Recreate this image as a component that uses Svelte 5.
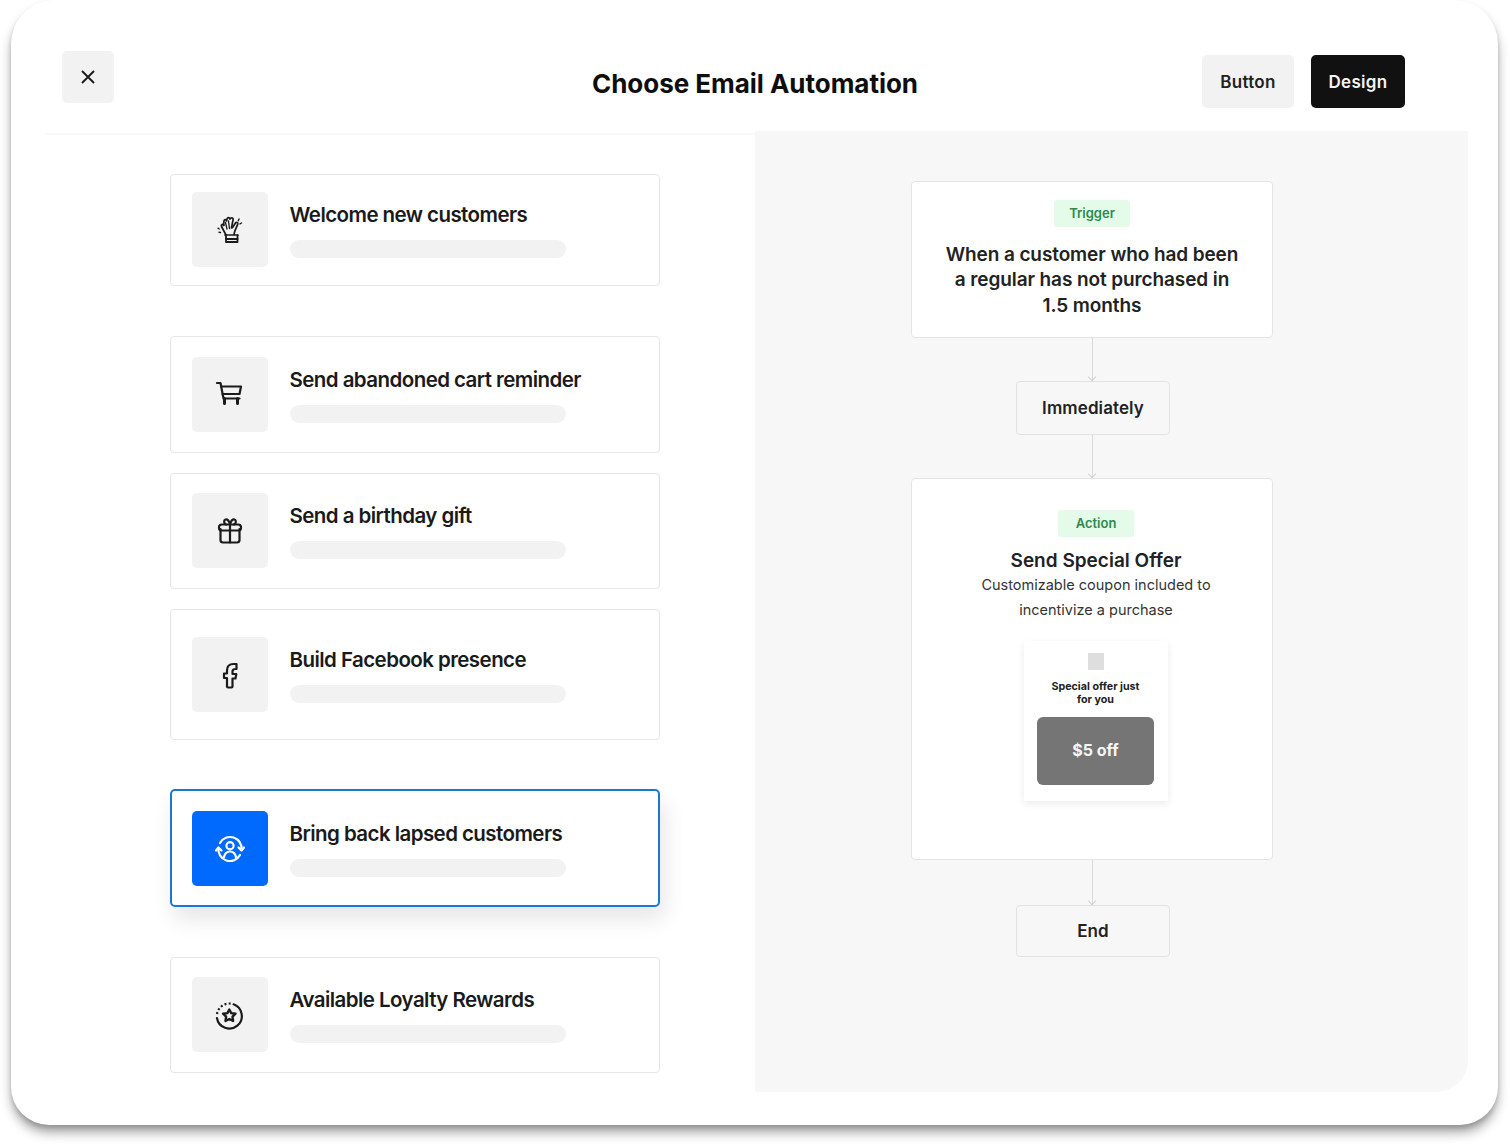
<script>
  const cards = [
    { id: 'c1', title: 'Welcome new customers', icon: 'hand' },
    { id: 'c2', title: 'Send abandoned cart reminder', icon: 'cart' },
    { id: 'c3', title: 'Send a birthday gift', icon: 'gift' },
    { id: 'c4', title: 'Build Facebook presence', icon: 'fb' },
    { id: 'c5', title: 'Bring back lapsed customers', icon: 'user', active: true },
    { id: 'c6', title: 'Available Loyalty Rewards', icon: 'star' }
  ];
</script>

<div class="frame">
  <header class="top">
    <button class="close" aria-label="Close">
      <svg width="16" height="16" viewBox="0 0 16 16"><path d="M2 2l12 12M14 2L2 14" stroke="#1a1a1a" stroke-width="1.9" fill="none"/></svg>
    </button>
    <h1>Choose Email Automation</h1>
    <div class="actions">
      <button class="btn light">Button</button>
      <button class="btn dark">Design</button>
    </div>
  </header>

  <div class="body">
    <section class="list">
      {#each cards as c}
        <article class="card {c.id}" class:active={c.active}>
          <div class="ico">
            <svg width="32" height="32" viewBox="0 0 32 32" fill="none" stroke="currentColor" stroke-width="2.200" stroke-linecap="round" stroke-linejoin="round">
              {#if c.icon === 'hand'}
                <path d="M12 21L7.500 12.500c-.9-1.900 1.400-3 2.500-1.300" stroke-width="1.700"/>
                <path d="M9.500 11.500L10 6.800c.3-1.700 2.500-1.500 2.600.2M12.500 7l.7-2.500c.5-1.500 2.600-1.200 2.600.4M15.800 5l.9-.8c1-.9 2.800-.2 2.400 1.300l-1.600 8.500" stroke-width="1.700"/>
                <path d="M11.500 8.500l1.500 6.500M14.500 7l1 7.500" stroke-width="1.300"/>
                <path d="M18.500 13.500l3-4.500c.8-1.200 2.800-.3 2.300 1.100l-3 7-.8 3.400" stroke-width="1.700"/>
                <path d="M11 21h13" stroke-width="1.700"/>
                <path d="M12 21.500v6.500h11.500v-6.500" stroke-width="1.800"/>
                <path d="M12 25h11.500" stroke-width="1.800"/>
                <path d="M25 5l-.7 1.800M27.500 9l-1.500.8M5.200 15l-1.200-.8M6.500 18.500l-1.500-.3" stroke-width="1.400"/>
              {:else if c.icon === 'cart'}
                <g transform="translate(0 -1)">
                  <path d="M3 5h3.500l3 15.500h16"/>
                  <path d="M7 8.500h20l-1.500 7.500H8.500"/>
                  <path d="M10.500 20.500v5M23.500 20.500v5" stroke-width="3"/>
                </g>
              {:else if c.icon === 'gift'}
                <path d="M6.500 14v11a2.500 2.500 0 0 0 2.500 2.500h14a2.500 2.500 0 0 0 2.500-2.500V14"/>
                <rect x="5" y="9.500" width="22" height="6" rx="2.800"/>
                <path d="M16 9.500v18M16 9.500c-1-4.500-3-5.500-4.500-5-2 .7-1.800 4 .5 5M16 9.500c1-4.500 3-5.500 4.500-5 2 .7 1.800 4-.5 5"/>
              {:else if c.icon === 'fb'}
                <path d="M14 28.500h3.500a1 1 0 0 0 1-1v-8h3l.8-4.500h-3.800v-2.500c0-1.500 1-2.500 3-2.500h1V5h-3c-4 0-6.500 2.500-6.500 6.500v3H10V19h3v8.500a1 1 0 0 0 1 1z"/>
              {:else if c.icon === 'user'}
                <circle cx="16" cy="12.800" r="3.600"/>
                <path d="M10 24c1-4 3-5.500 6-5.500s5 1.500 6 5.500"/>
                <path d="M6 10A11.500 11.500 0 0 1 27.500 17M26 22A11.500 11.500 0 0 1 4.500 15"/>
                <path d="M24.500 14.500l3 3 2.500-3M2 17.500l2.500-3 3 3"/>
              {:else}
                <path d="M19.600 5.300A12.500 12.500 0 1 1 3 19.200"/>
                <path d="M3 15A12.500 12.500 0 0 1 17 4.600" stroke-dasharray="2 2.200" stroke-linecap="butt"/>
                <path d="M15.300 10.500l1.900 3.600 4.300.6-3 3 .6 4.300-3.800-2-3.800 2 .6-4.300-3-3 4.300-.6z" stroke-width="2.400"/>
              {/if}
            </svg>
          </div>
          <div class="info">
            <h2>{c.title}</h2>
            <div class="bar"></div>
          </div>
        </article>
      {/each}
    </section>

    <section class="flow">
      <div class="node trigger">
        <span class="badge">Trigger</span>
        <p class="big">When a customer who had been a regular has not purchased in 1.5 months</p>
      </div>
      <div class="line l1"></div>
      <div class="step">Immediately</div>
      <div class="line l2"></div>
      <div class="node action">
        <span class="badge">Action</span>
        <h3>Send Special Offer</h3>
        <p class="sub">Customizable coupon included to incentivize a purchase</p>
        <div class="mail">
          <div class="sq"></div>
          <p>Special offer just for you</p>
          <div class="off">$5 off</div>
        </div>
      </div>
      <div class="line l3"></div>
      <div class="step end">End</div>
    </section>
  </div>
</div>

<style>
  :global(body) { margin: 0; min-height: 1148px; background: #fff; font-family: Inter, "Liberation Sans", sans-serif; color: #1c1c1c; }
  * { box-sizing: border-box; }
  .frame {
    width: 1487px; height: 1125px; margin-left: 11px; background: #fff;
    border-radius: 44px 44px 38px 38px;
    box-shadow: 0 8px 12px -1px rgba(0,0,0,.38), 0 3px 4px rgba(0,0,0,.12);
    padding-left: 34px; padding-right: 30px;
    display: flex; flex-direction: column;
  }
  .top { height: 131px; flex: none; position: relative; display: flex; align-items: flex-start; margin-left: 17px; }
  .close { margin-top: 51px; width: 52px; height: 52px; border: 0; border-radius: 5px; background: #f2f2f2; display: flex; align-items: center; justify-content: center; padding: 0; }
  h1 { position: absolute; left: 0; margin: 0; top: 67px; text-align: center; font-size: 26px; line-height: 34px; font-weight: 700; letter-spacing: -.03px; color: #0e0e0e; width: 1386px; }
  .actions { margin-left: auto; margin-top: 55px; margin-right: 63px; display: flex; gap: 17px; position: relative; }
  .btn { height: 53px; border: 0; border-radius: 5px; padding: 2px 0 0; font: 600 17px/1 Inter, sans-serif; letter-spacing: .3px; }
  .light { width: 92px; background: #f2f2f2; color: #222; }
  .dark { width: 94px; background: #111; color: #f4f4f4; }
  .body { display: flex; flex: none; height: 961px; }
  .list { width: 710px; border-top: 2px solid #f8f8f8; margin-top: 2px; padding: 39px 0 0 125px; }
  .card { width: 490px; border: 1.500px solid #e6e6e6; border-radius: 4px; background: #fff; display: flex; align-items: flex-start; padding-left: 21px; gap: 21.500px; }
  .c1 { height: 112px; padding-top: 17px; }
  .c2 { height: 117px; margin-top: 50px; padding-top: 20px; }
  .c3 { height: 116px; margin-top: 20px; padding-top: 19px; }
  .c4 { height: 131px; margin-top: 20px; padding-top: 27px; }
  .c5 { height: 118px; margin-top: 49px; padding-top: 20px; }
  .c6 { height: 116px; margin-top: 50px; padding-top: 19px; }
  .active { border: 2px solid #1c76d6; border-radius: 5px; padding-left: 20px; box-shadow: 4px 12px 22px rgba(0,0,0,.1); }
  .ico { width: 76px; height: 75px; flex: none; border-radius: 5px; background: #f2f2f2; display: flex; align-items: center; justify-content: center; color: #1b1b1b; }
  .active .ico { background: #006aff; color: #fff; }
  .info { width: 276px; }
  h2 { margin: 9px 0 0; font-size: 20.500px; line-height: 28px; font-weight: 600; letter-spacing: -.56px; white-space: nowrap; color: #1a1a1a; }
  .bar { margin-top: 11px; height: 18px; border-radius: 9px; background: #f2f2f2; }
  .flow { width: 713px; background: #f7f7f7; border-bottom-right-radius: 32px; padding-left: 156px; display: flex; flex-direction: column; align-items: flex-start; padding-top: 50px; }
  .node { width: 362px; background: #fff; border: 1.500px solid #e4e4e4; border-radius: 4px; display: flex; flex-direction: column; align-items: center; text-align: center; }
  .trigger { height: 157px; padding-top: 18px; }
  .action { height: 382px; padding: 31px 0 0 8px; }
  .badge { width: 76px; height: 27px; background: #e4fbe9; border-radius: 3px; color: #2c8a4c; font-size: 13px; font-weight: 600; line-height: 27px; }
  .big { margin: 14.500px 0 0; width: 296px; font-size: 19px; line-height: 25.500px; font-weight: 600; color: #222; letter-spacing: -.1px; }
  h3 { margin: 11px 0 0; font-size: 19px; line-height: 26px; font-weight: 600; color: #222; }
  .sub { margin: -2px 0 0; width: 260px; font-size: 14.500px; line-height: 25px; color: #333; }
  .mail { margin-top: 19px; width: 144px; height: 160px; background: #fff; box-shadow: 0 3px 8px rgba(0,0,0,.08); display: flex; flex-direction: column; align-items: center; padding: 12px 1px 0 0; }
  .sq { width: 16px; height: 17px; background: #dedede; }
  .mail p { margin: 10px 0 0; width: 100px; font-size: 10.700px; line-height: 13px; font-weight: 700; color: #222; }
  .off { margin-top: 11px; width: 117px; height: 68px; border-radius: 6px; background: #757575; color: #f5f5f5; font-size: 16px; font-weight: 700; line-height: 67px; }
  .line { width: 1px; background: #d9d9d9; margin-left: 181px; position: relative; }
  .line::after { content: ""; position: absolute; left: -3px; bottom: 1px; width: 5px; height: 5px; border-right: 1px solid #d0d0d0; border-bottom: 1px solid #d0d0d0; transform: rotate(45deg); }
  .l1 { height: 43px; } .l2 { height: 43px; } .l3 { height: 45px; }
  .step { margin-left: 105px; width: 154px; height: 54px; border: 1.500px solid #e2e2e2; border-radius: 4px; background: #f7f7f7; font-size: 17px; letter-spacing: .1px; font-weight: 600; line-height: 53px; text-align: center; color: #222; }
  .end { height: 52px; line-height: 51px; }
</style>
